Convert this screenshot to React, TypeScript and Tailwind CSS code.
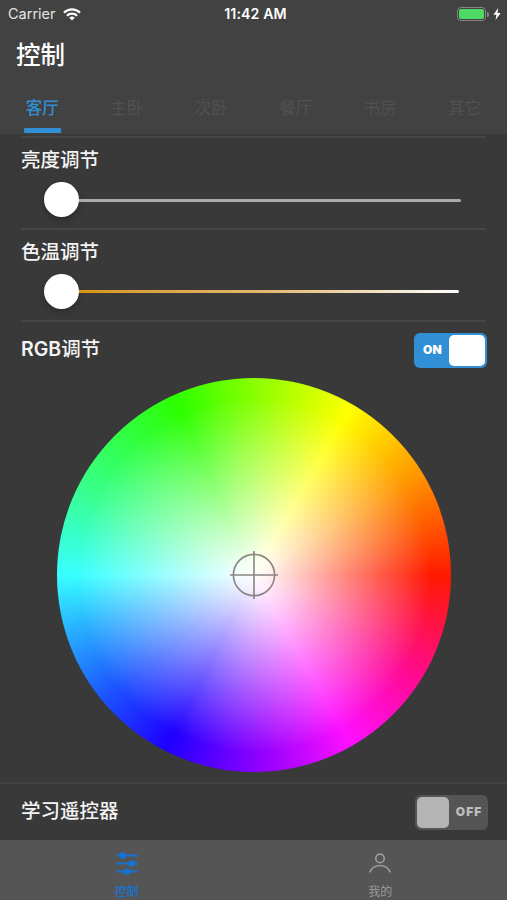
import { useState } from 'react'
import clsx from 'clsx'

const rooms = ['客厅', '主卧', '次卧', '餐厅', '书房', '其它']

function StatusBar() {
  return (
    <div className="grid h-7 grid-cols-3 items-center pl-2 pr-1 text-white">
      <div className="flex items-center gap-[7px] text-[14.5px] text-[#e4e4e4]">
        <span>Carrier</span>
        <svg width="18" height="13" viewBox="0 0 18 13" fill="none" stroke="#fff" strokeWidth="2.3">
          <path d="M1 4.6a11.6 11.6 0 0 1 16 0" />
          <path d="M3.9 7.7a7.3 7.3 0 0 1 10.2 0" />
          <path d="M9 12.6 6.2 9.8a4 4 0 0 1 5.6 0z" fill="#fff" stroke="none" />
        </svg>
      </div>
      <div className="text-center text-[14.2px] font-semibold tracking-[0.1px]">11:42 AM</div>
      <div className="flex items-center justify-end">
        <div className="h-[14px] w-[29px] rounded-[4px] border-[1.5px] border-[#858585] p-px">
          <div className="h-full rounded-[2px] bg-[#4cd964]" />
        </div>
        <div className="ml-px h-[5px] w-[2px] rounded-r bg-[#858585]" />
        <svg className="ml-1 mr-[2px]" width="8" height="12" viewBox="0 0 8 12" fill="#fff">
          <path d="M5.2 0 .4 6.7h3L2.6 12 7.6 5H4.5z" />
        </svg>
      </div>
    </div>
  )
}

function Slider({ label, warm }: { label: string; warm?: boolean }) {
  return (
    <section className="mx-[21px] h-[92px] border-b-2 border-[#474747]">
      <h2 className="pt-[7px] text-[19.5px] font-medium leading-[30px] text-[#f4f4f4]">{label}</h2>
      <div className={clsx('ml-[23px] flex h-[35px] items-center', warm ? 'mr-[27px] mt-[7px]' : 'mr-[25px] mt-[7px]')}>
        <div className="size-[35px] shrink-0 rounded-full bg-white shadow-[0_3px_6px_rgba(0,0,0,0.25)]" />
        <div
          className={clsx(
            'h-[3px] flex-1 rounded-r-full',
            warm ? 'bg-linear-to-r from-[#d9960f] via-[#e3b96f] to-white' : 'relative top-px bg-[#ababab]',
          )}
        />
      </div>
    </section>
  )
}

function Toggle({ on, onChange }: { on: boolean; onChange: () => void }) {
  return (
    <button
      onClick={onChange}
      className={clsx(
        'flex h-[35px] w-[73px] items-center rounded-md p-[2px] text-[12px] font-black text-white',
        on ? 'bg-[#318fd6]' : 'flex-row-reverse bg-[#555555]',
      )}
    >
      <span className={clsx('flex-1 text-center', on ? 'tracking-[0.2px]' : 'pl-[3px] tracking-[1px] text-[#bdbdbd]')}>
        {on ? 'ON' : 'OFF'}
      </span>
      <span className={clsx('h-[31px] rounded-[5px]', on ? 'w-[36px] bg-white' : 'w-[32px] bg-[#b4b4b4]')} />
    </button>
  )
}

function ColorWheel() {
  return (
    <div className="ml-[57px] flex size-[394px] items-center justify-center rounded-full bg-[radial-gradient(circle_closest-side,#fff_0%,rgba(255,255,255,0.93)_8%,rgba(255,255,255,0.5)_45%,rgba(255,255,255,0.2)_72%,rgba(255,255,255,0)_90%),conic-gradient(from_90deg,#ff1a00_0deg,#ff0a90_32deg,#ff10ff_60deg,#9500ff_87deg,#1e00ff_117deg,#1c50ff_140deg,#28b4ff_164deg,#38ffff_180deg,#38ff90_206deg,#30ff40_228deg,#2cff00_246deg,#90ff00_272deg,#ffff00_300deg,#ff9800_328deg,#ff1a00_360deg)]">
      <svg width="48" height="48" viewBox="0 0 48 48" fill="none" stroke="#8a8484" strokeWidth="1.6">
        <circle cx="24" cy="24" r="20.6" />
        <path d="M24 0v48M0 24h48" />
      </svg>
    </div>
  )
}

export default function App() {
  const [room, setRoom] = useState(0)
  const [rgb, setRgb] = useState(true)
  const [learning, setLearning] = useState(false)

  return (
    <div className="flex h-[900px] w-[507px] flex-col overflow-hidden bg-[#393939] font-['Inter','Noto_Sans_CJK_SC',sans-serif]">
      <header className="h-[134px] shrink-0 bg-[#424242]">
        <StatusBar />
        <h1 className="pl-4 text-[24.5px] font-medium leading-[54px] text-white">控制</h1>
        <nav className="grid h-[52px] grid-cols-6">
          {rooms.map((name, i) => (
            <button
              key={name}
              onClick={() => setRoom(i)}
              className={clsx(
                'flex flex-col items-center text-[16.5px] leading-[52px]',
                i === room ? 'font-medium text-[#318fd6]' : 'text-[#515151]',
              )}
            >
              <span className="h-[46px]">{name}</span>
              {i === room && <span className="h-[5px] w-[37px] rounded-[1px] bg-[#318fd6]" />}
            </button>
          ))}
        </nav>
      </header>

      <main className="flex-1 pt-[2px]">
        <div className="mx-[21px] h-[2px] bg-[#474747]" />
        <Slider label="亮度调节" />
        <Slider label="色温调节" warm />
        <div className="flex h-[56px] items-center justify-between pl-[21px] pr-5">
          <h2 className="text-[19.5px] font-medium text-[#f4f4f4]">
            <span className="font-semibold">RGB</span>调节
          </h2>
          <Toggle on={rgb} onChange={() => setRgb(!rgb)} />
        </div>
        <ColorWheel />
        <div className="mt-[10px] flex h-[58px] items-center justify-between border-t-2 border-[#424242] pl-[21px] pr-[19px]">
          <h2 className="text-[19.5px] font-medium text-[#f4f4f4]">学习遥控器</h2>
          <Toggle on={learning} onChange={() => setLearning(!learning)} />
        </div>
      </main>

      <footer className="grid h-[60px] shrink-0 grid-cols-2 bg-[#555555] text-[12px]">
        <button className="flex flex-col items-center pt-3 font-medium text-[#1673d4]">
          <svg width="24" height="24" viewBox="0 0 24 24" fill="currentColor" stroke="currentColor" strokeWidth="2">
            <path d="M1.5 3.5h21M1.5 11.5h21M1.5 19.5h21" />
            <g stroke="none">
              <circle cx="8" cy="3.5" r="3.3" />
              <circle cx="17" cy="11.5" r="3.3" />
              <circle cx="12" cy="19.5" r="3.3" />
            </g>
          </svg>
          <span className="mt-1 leading-[24px]">控制</span>
        </button>
        <button className="flex flex-col items-center pt-3 text-[#9b9b9b]">
          <svg width="24" height="24" viewBox="0 0 24 24" fill="none" stroke="currentColor" strokeWidth="1.7">
            <circle cx="12" cy="6.4" r="4.2" />
            <path d="M1.7 20.3c2-4.2 5.6-6.8 10.3-6.8s8.300 2.600 10.300 6.800" />
          </svg>
          <span className="mt-1 leading-[24px]">我的</span>
        </button>
      </footer>
    </div>
  )
}
